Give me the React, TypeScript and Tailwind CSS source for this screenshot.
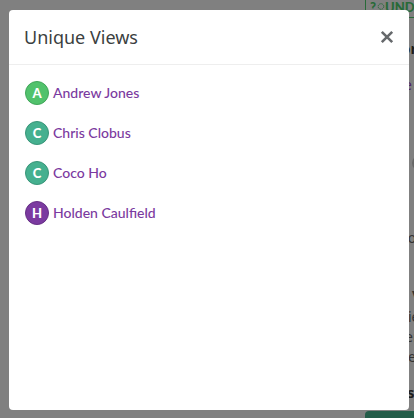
type Viewer = {
  name: string;
  color: string;
};

const viewers: Viewer[] = [
  { name: "Andrew Jones", color: "bg-[#51c26c] border-[#41a65a]" },
  { name: "Chris Clobus", color: "bg-[#45b08f] border-[#399579]" },
  { name: "Coco Ho", color: "bg-[#45b08f] border-[#399579]" },
  { name: "Holden Caulfield", color: "bg-[#7b3aa0] border-[#663085]" },
];

// The page that stays dimmed behind the modal
function Backdrop() {
  return (
    <div className="flex h-full justify-end overflow-hidden bg-[#808080]">
      <div className="w-[49px] shrink-0 whitespace-nowrap font-['Noto_Sans',sans-serif] text-[14px] leading-5 text-[#333]">
        <div className="flex h-[18px] items-start border-b border-l border-[#286a38] pl-1 font-[Lato,sans-serif] text-[13px] font-black leading-[15px] text-[#286a38]">
          <span>?</span>
          <svg viewBox="0 0 8 12" className="mt-[3px] ml-px h-3 w-2 shrink-0" fill="none" stroke="currentColor">
            <circle cx="4" cy="3.5" r="2.8" strokeDasharray="1.5 .7" />
            <path d="M3 8h2" />
          </svg>
          <span>UNDE</span>
        </div>
        <div className="h-[20px]"></div>
        <div className="pl-[36px] text-[15px] font-bold text-[#1d1d1d]">or</div>
        <div className="mt-[17px] pl-[39px] text-[#50266a]">e</div>
        <div className="mt-[60px] ml-[47px] size-4 rounded-full bg-[#666]"></div>
        <div className="mt-[57px] pl-[38px]"><span className="-ml-[2px]">co</span></div>
        <div className="mt-[36px] pl-[47px] font-bold">v</div>
        <div className="mt-[3px] pl-[43px]">ie</div>
        <div className="pl-[40px]">er</div>
        <div className="pl-[43px]">e</div>
        <div className="mt-[15px] pl-[42px] text-[15px] font-bold text-[#1d1d1d]">s</div>
        <div className="mt-[9px] h-8 w-20 rounded bg-[#245c49]"></div>
      </div>
    </div>
  );
}

function CloseIcon() {
  return (
    <svg viewBox="0 0 14 14" className="size-[14px]" fill="none" stroke="currentColor" strokeWidth="2.6">
      <path d="M1.8 1.8l10.4 10.4M12.2 1.8L1.8 12.2" />
    </svg>
  );
}

function ViewerRow({ name, color }: Viewer) {
  return (
    <li className="flex h-6 items-center gap-1">
      <span
        className={`flex size-6 items-center justify-center rounded-full border pt-px text-[13px] leading-none font-black text-white ${color}`}
      >
        {name[0]}
      </span>
      <a href="#" className="pb-px text-[14px] leading-5 font-medium text-[#7b3aa0]">
        {name}
      </a>
    </li>
  );
}

function App() {
  return (
    <div className="relative h-screen overflow-hidden font-[Lato,sans-serif]">
      <Backdrop />
      <div className="absolute top-[10px] left-[9px] flex h-[400px] w-[400px] flex-col rounded bg-white">
        <div className="flex h-[55px] shrink-0 items-center justify-between border-b border-[#eeeeee] pr-[15px] pl-[15px]">
          <h2 className="font-['Noto_Sans',sans-serif] text-[18px] text-[#3c3f41]">
            Unique Views
          </h2>
          <button className="cursor-pointer text-[#66696c]">
            <CloseIcon />
          </button>
        </div>
        <ul className="flex flex-col gap-4 px-4 py-4">
          {viewers.map((viewer) => (
            <ViewerRow key={viewer.name} {...viewer} />
          ))}
        </ul>
      </div>
    </div>
  );
}

export default App;
